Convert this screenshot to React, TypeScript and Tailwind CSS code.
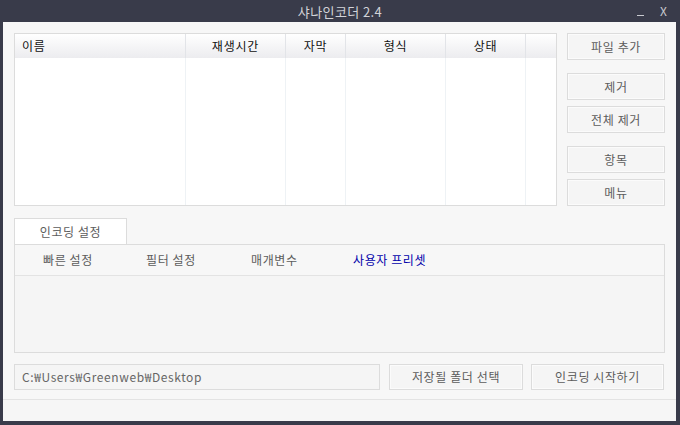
import React from 'react'

const font = { fontFamily: '"Noto Sans CJK KR", "Noto Sans", sans-serif' }

const columns = [
  { label: '이름', align: 'text-left pl-[7px]' },
  { label: '재생시간', align: 'text-center' },
  { label: '자막', align: 'text-center' },
  { label: '형식', align: 'text-center' },
  { label: '상태', align: 'text-center' },
  { label: '', align: 'text-center' },
]

function SideButton({ label, className = '' }: { label: string; className?: string }) {
  return (
    <button
      className={`h-[27px] w-full border border-[#dcdcdc] bg-[#f5f5f5] text-[12px] tracking-[0.6px] text-[#5c5c5c] shadow-[inset_0_0_0_1px_#fbfbfb] ${className}`}
    >
      {label}
    </button>
  )
}

export default function App() {
  return (
    <div className="flex h-[425px] w-[680px] flex-col bg-[#393b4a]" style={font}>
      {/* title bar */}
      <div className="grid h-[22px] grid-cols-[1fr_auto_1fr] items-center">
        <div />
        <div className="text-[13px] leading-none tracking-[0.4px] text-[#d2d3d8]">샤나인코더 2.4</div>
        <div className="flex items-center justify-end gap-[16px] pr-[13px] text-[#c9cad0]">
          <span className="mt-[8px] block h-[1px] w-[7px] bg-[#c9cad0]" />
          <span className="text-[12px] leading-none">X</span>
        </div>
      </div>

      <div className="mb-[4px] ml-[3px] mr-[4px] flex flex-1 flex-col bg-[#f7f7f7]">
        <div className="flex flex-1 flex-col px-[11px] pt-[11px]">
          {/* list + buttons */}
          <div className="flex gap-[10px]">
            <div className="flex h-[173px] w-[543px] flex-col border border-[#dcdcdc] bg-white">
              <div className="grid h-[24px] grid-cols-[171px_100px_60px_100px_80px_1fr] bg-gradient-to-b from-white to-[#ececef]">
                {columns.map((c, i) => (
                  <div
                    key={i}
                    className={`border-r border-[#e2e4e8] text-[12px] leading-[24px] tracking-[0.8px] text-[#111] last:border-r-0 ${c.align}`}
                  >
                    {c.label}
                  </div>
                ))}
              </div>
              <div className="grid flex-1 grid-cols-[171px_100px_60px_100px_80px_1fr]">
                {columns.map((_, i) => (
                  <div key={i} className="border-r border-[#eef2f5] last:border-r-0" />
                ))}
              </div>
            </div>
            <div className="flex w-[98px] flex-col">
              <SideButton label="파일 추가" />
              <SideButton label="제거" className="mt-[13px]" />
              <SideButton label="전체 제거" className="mt-[6px]" />
              <SideButton label="항목" className="mt-[13px]" />
              <SideButton label="메뉴" className="mt-[6px]" />
            </div>
          </div>

          {/* encoding settings */}
          <div className="mt-[12px] flex">
            <div className="h-[26px] w-[113px] border border-b-0 border-[#dcdcdc] bg-white text-center text-[12px] leading-[25px] tracking-[0.6px] text-[#5c5c5c]">
              인코딩 설정
            </div>
          </div>
          <div className="flex h-[109px] flex-col border border-[#dcdcdc] bg-[#f5f5f5]">
            <div className="flex h-[31px] items-center border-b border-[#e3e3e3] bg-[#f7f7f7] text-[12px] tracking-[0.6px] text-[#5c5c5c]">
              <span className="ml-[28px] w-[103px]">빠른 설정</span>
              <span className="w-[105px]">필터 설정</span>
              <span className="w-[102px]">매개변수</span>
              <span className="text-[#0000aa]">사용자 프리셋</span>
            </div>
            <div className="flex-1" />
          </div>

          {/* output path row */}
          <div className="mt-[11px] flex h-[26px] items-stretch">
            <div className="flex w-[366px] items-center border border-[#dcdcdc] bg-[#f5f5f5] pl-[7px] text-[12px] tracking-[0.6px] text-[#666]">
              C:₩Users₩Greenweb₩Desktop
            </div>
            <button className="ml-[9px] w-[134px] border border-[#dcdcdc] bg-[#f5f5f5] text-[12px] tracking-[0.6px] text-[#5c5c5c] shadow-[inset_0_0_0_1px_#fbfbfb]">
              저장될 폴더 선택
            </button>
            <button className="ml-[8px] w-[133px] border border-[#dcdcdc] bg-[#f5f5f5] text-[12px] tracking-[0.6px] text-[#5c5c5c] shadow-[inset_0_0_0_1px_#fbfbfb]">
              인코딩 시작하기
            </button>
          </div>
        </div>

        {/* status bar */}
        <div className="mt-[9px] h-[22px] border-t border-[#e3e3e3] bg-[#f6f6f6]" />
      </div>
    </div>
  )
}
